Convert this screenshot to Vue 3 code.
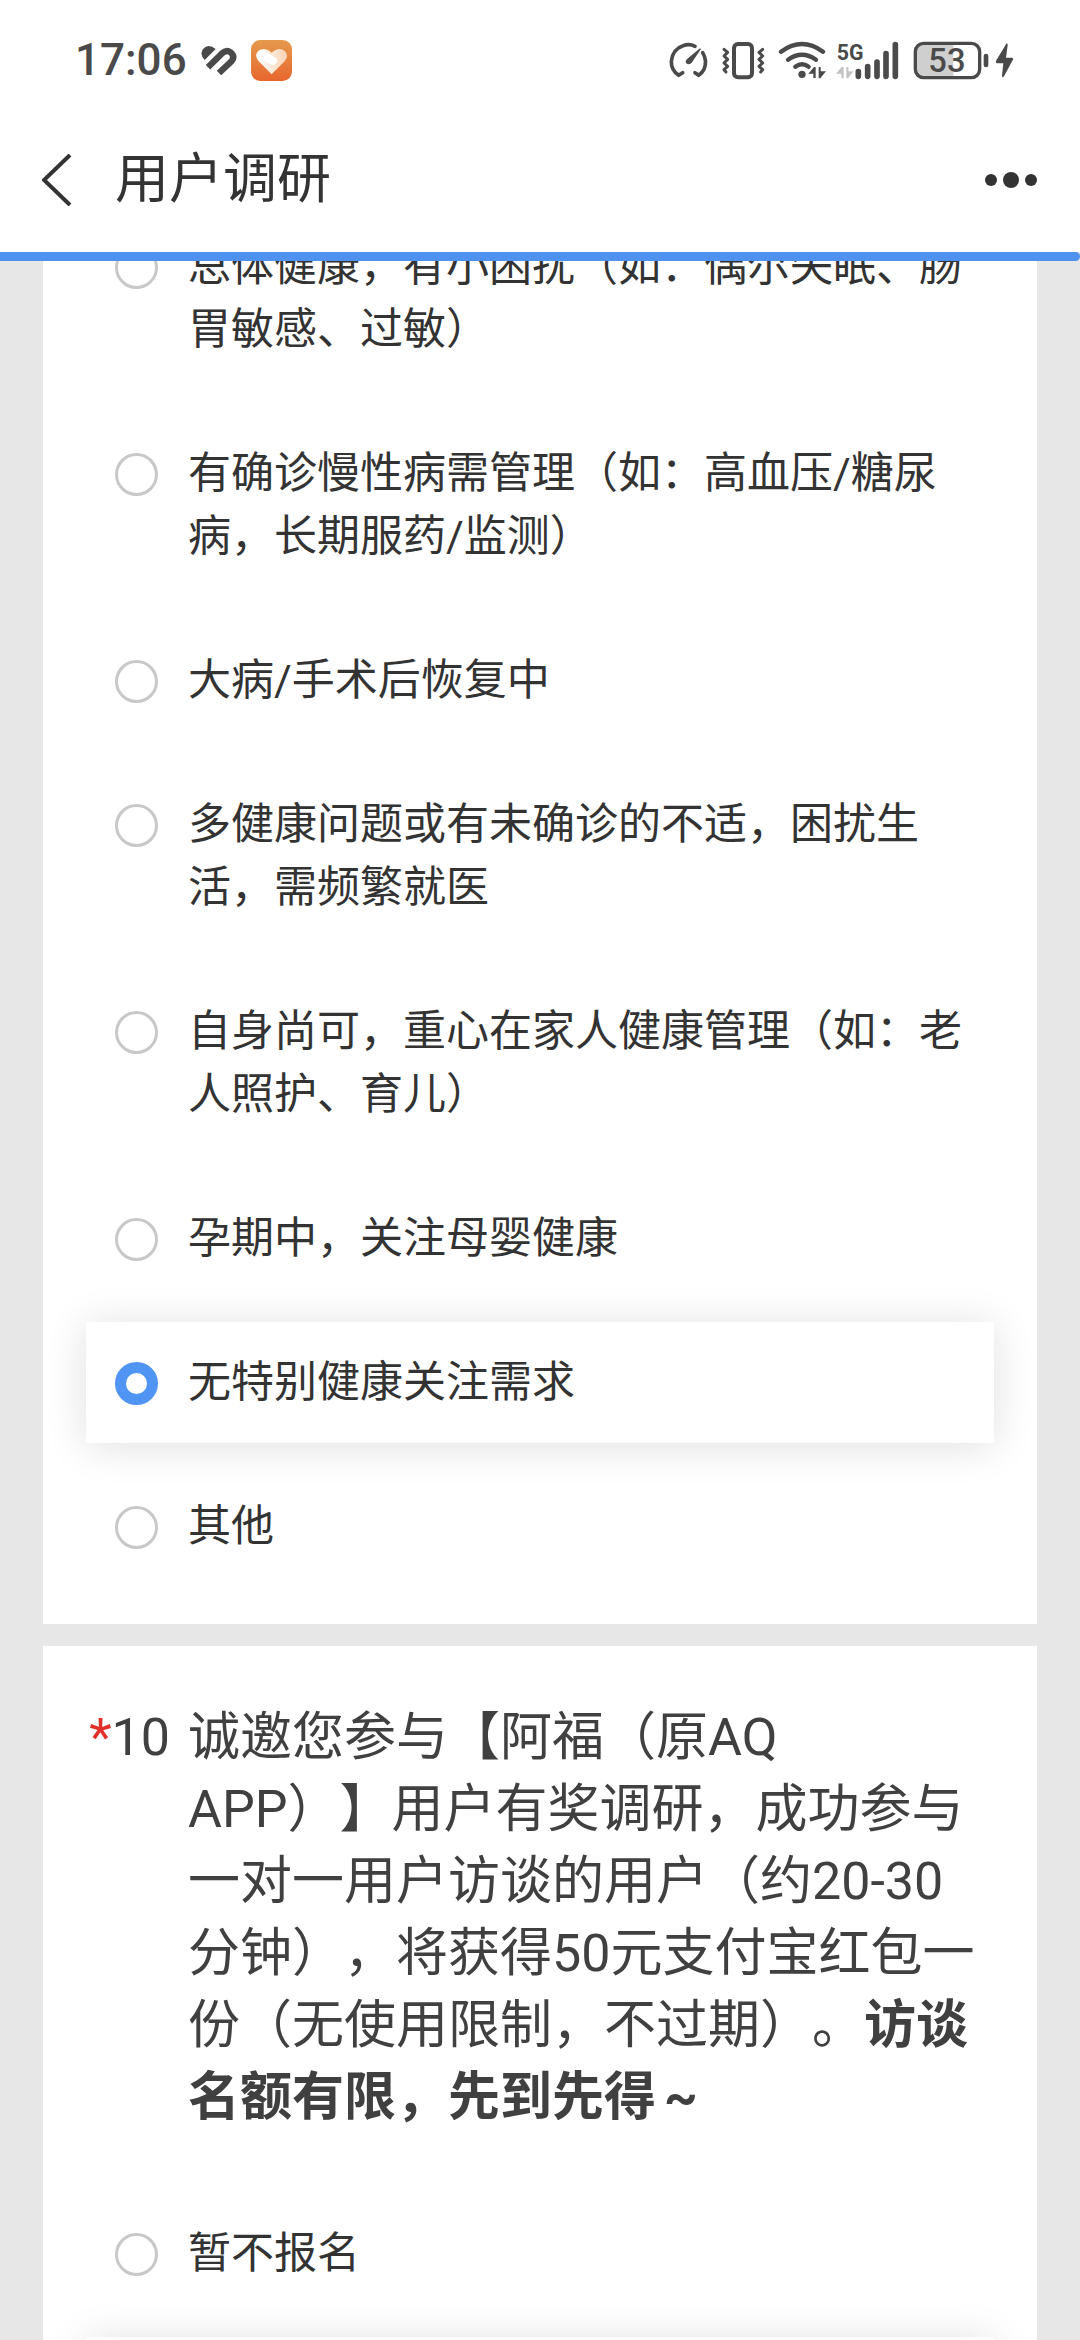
<script setup>
import { ref } from 'vue'

const healthOptions = [
  '总体健康，有小困扰（如：偶尔失眠、肠胃敏感、过敏）',
  '有确诊慢性病需管理（如：高血压/糖尿病，长期服药/监测）',
  '大病/手术后恢复中',
  '多健康问题或有未确诊的不适，困扰生活，需频繁就医',
  '自身尚可，重心在家人健康管理（如：老人照护、育儿）',
  '孕期中，关注母婴健康',
  '无特别健康关注需求',
  '其他',
]
const signupOptions = ['暂不报名', '']

const health = ref(6)
const signup = ref(1)
</script>

<template>
  <div class="screen">
    <header class="top">
      <div class="status">
        <div class="status-left">
          <span class="time">17:06</span>
          <svg width="36" height="30" viewBox="12 14 108 90" aria-hidden="true">
            <path d="M33 81 L74 40 Q88 27 101 36 Q115 48 104 62 L66 98" fill="none" stroke="#4a4a4a" stroke-width="19" />
            <path d="M23 59 Q7 43 18 26 Q34 8 56 26 Z" fill="#4a4a4a" />
          </svg>
          <svg width="41" height="41" viewBox="0 0 123 123" aria-hidden="true">
            <defs>
              <linearGradient id="tile" x1="0" y1="0" x2="0" y2="1">
                <stop offset="0" stop-color="#e59a4c" />
                <stop offset="1" stop-color="#e8662e" />
              </linearGradient>
              <linearGradient id="heart" x1="0" y1="0" x2="1" y2="0">
                <stop offset="0" stop-color="#fff" />
                <stop offset="1" stop-color="#f8d3b4" />
              </linearGradient>
            </defs>
            <rect width="123" height="123" rx="28" fill="url(#tile)" />
            <path d="M62 103 L23 64 Q8 46 22 33 Q40 19 62 38 Q84 19 101 33 Q116 46 101 64 Z" fill="url(#heart)" />
            <path d="M30 43 L66 62" stroke="#fff" stroke-width="24" stroke-linecap="round" />
          </svg>
        </div>
        <div class="status-right">
          <svg width="41" height="39" viewBox="54 60 123 117" aria-hidden="true">
            <g fill="none" stroke="#4a4a4a" stroke-width="11" stroke-linecap="round" stroke-linejoin="round">
              <path d="M95 155 L83 163 Q60 147 61 121 Q65 84 96 74 Q116 67 132 76" />
              <path d="M155 95 Q170 120 159 145 Q153 156 143 163 L132 155" />
            </g>
            <path d="M150 84 L122 125 Q113 134 106 127 Q101 120 109 113 L147 82 Z" fill="#4a4a4a" />
          </svg>
          <svg width="48" height="39" viewBox="207 60 144 117" aria-hidden="true">
            <g fill="none" stroke="#4a4a4a" stroke-linecap="round" stroke-linejoin="round">
              <rect x="249" y="69" width="54" height="100" rx="12" stroke-width="12" />
              <path stroke-width="9" d="M219 85 L230 94 L219 105 L230 115 L219 126 L230 136 L219 146 L225 153" />
              <path stroke-width="9" d="M335 85 L324 94 L335 105 L324 115 L335 126 L324 136 L335 146 L329 153" />
            </g>
          </svg>
          <svg width="48" height="39" viewBox="381 60 144 117" aria-hidden="true">
            <g fill="none" stroke="#4a4a4a" stroke-width="13" stroke-linecap="round">
              <path d="M390 92 Q453 46 516 92" />
              <path d="M411 116 Q453 86 495 116" />
              <path d="M433 137 Q453 123 473 137" />
            </g>
            <circle cx="453" cy="160" r="11" fill="#4a4a4a" />
            <path d="M472 158 L489 138 H494 V171 H487 V158 Z M503 138 H509 V151 H525 L508 172 H503 Z" fill="#4a4a4a" />
          </svg>
          <svg width="67" height="39" viewBox="555 60 201 117" role="img" aria-label="5G">
            <text class="net" x="557" y="116">5G</text>
            <path d="M555 158 L572 138 H578 V172 H571 V158 Z M586 138 H592 V151 H608 L591 172 H586 Z" fill="#c4c4c4" />
            <g stroke="#4a4a4a" stroke-width="17" stroke-linecap="round">
              <path d="M622 152 V166 M650 137 V166 M678 123 V166 M705 98 V166 M733 71 V166" />
            </g>
          </svg>
          <svg width="102" height="39" viewBox="786 60 306 117" role="img" aria-label="53%">
            <path d="M907 65 H812 Q793 67 793 88 V150 Q793 170 812 170 H907 Z" fill="#cfcfcf" />
            <rect x="793" y="67" width="193" height="103" rx="25" fill="none" stroke="#4a4a4a" stroke-width="10" />
            <path d="M1005 105 V132" stroke="#4a4a4a" stroke-width="14" stroke-linecap="round" />
            <path d="M1066 68 Q1071 66 1070 73 L1065 110 H1083 Q1089 112 1085 118 L1059 166 Q1053 172 1053 164 L1057 127 H1038 Q1032 124 1036 118 Z" fill="#4a4a4a" />
            <text class="level" x="832" y="154">53</text>
          </svg>
        </div>
      </div>
      <nav class="nav">
        <button class="back" type="button" aria-label="返回">
          <svg width="30" height="52" viewBox="0 0 30 52" aria-hidden="true">
            <path d="M28 1 L2 26 L28 51" fill="none" stroke="#333" stroke-width="4" />
          </svg>
        </button>
        <h1>用户调研</h1>
        <button class="more" type="button" aria-label="更多">
          <svg width="54" height="16" viewBox="0 0 54 16" aria-hidden="true">
            <g fill="#333">
              <circle cx="7" cy="8" r="6" />
              <circle cx="27" cy="8" r="8" />
              <circle cx="47" cy="8" r="6" />
            </g>
          </svg>
        </button>
      </nav>
      <div class="track"><div class="bar"></div></div>
    </header>

    <main class="scroll">
      <form class="survey">
        <section class="card scrolled">
          <label v-for="(text, i) in healthOptions" :key="i" class="option" :class="{ picked: health === i }">
            <input v-model="health" type="radio" name="health" :value="i" />
            <span>{{ text }}</span>
          </label>
        </section>

        <section class="card question">
          <div class="title">
            <span class="number"><i>*</i>10</span>
            <h2>诚邀您参与【阿福（原AQ APP）】用户有奖调研，成功参与一对一用户访谈的用户（约20-30分钟），将获得50元支付宝红包一份（无使用限制，不过期）。<b>访谈名额有限，先到先得<span class="wave">~</span></b></h2>
          </div>
          <label v-for="(text, i) in signupOptions" :key="i" class="option" :class="{ picked: signup === i }">
            <input v-model="signup" type="radio" name="signup" :value="i" />
            <span>{{ text }}</span>
          </label>
        </section>
      </form>
    </main>
  </div>
</template>

<style>
body {
  margin: 0;
  background: #e7e7e7;
}
</style>

<style scoped>
.screen {
  display: flex;
  flex-direction: column;
  height: 100vh;
  overflow: hidden;
  background: #e7e7e7;
  color: #333;
  font-family: Roboto, "Noto Sans CJK SC", sans-serif;
  text-spacing-trim: space-all;
}
.top {
  flex: none;
  background: #fff;
}
.status {
  display: flex;
  align-items: center;
  justify-content: space-between;
  height: 120px;
  padding: 0 65px 0 75px;
}
.status-left,
.status-right {
  display: flex;
  align-items: center;
  gap: 10px;
}
.status-left {
  gap: 14px;
}
.time {
  color: #4a4a4a;
  font-size: 44px;
  font-weight: 500;
  line-height: 52px;
}
.net {
  fill: #4a4a4a;
  font-family: "Liberation Sans Narrow", Roboto, sans-serif;
  font-size: 64px;
  font-weight: 700;
}
.level {
  fill: #4a4a4a;
  font-size: 98px;
  font-weight: 500;
}
.nav {
  display: flex;
  align-items: center;
  height: 120px;
  margin-bottom: 12px;
  padding: 0 42px;
}
.nav button {
  display: flex;
  padding: 0;
  border: 0;
  background: none;
}
.nav h1 {
  flex: 1;
  margin: 0 0 0 43px;
  font-size: 54px;
  font-weight: 400;
  line-height: 72px;
}
.track {
  height: 9px;
  background: #e7e7e7;
}
.bar {
  height: 100%;
  border-radius: 0 5px 5px 0;
  background: #4f91ee;
}
.scroll {
  flex: 1;
  min-height: 0;
  overflow: hidden;
}
.survey {
  display: flex;
  flex-direction: column;
  gap: 22px;
  padding: 0 43px;
}
.card {
  display: flex;
  flex-direction: column;
  gap: 23px;
  padding: 0 43px 37px;
  background: #fff;
}
/* The list is shown part-way through its scroll. */
.scrolled {
  margin-top: -55px;
}
.question {
  padding-top: 56px;
}
.title {
  display: flex;
  margin-bottom: 36px;
  color: #404040;
  font-size: 52px;
  line-height: 72px;
}
.number {
  flex: none;
  box-sizing: border-box;
  width: 102px;
  padding-right: 18px;
  text-align: right;
}
.number i {
  color: #e0302a;
  font-style: normal;
}
.title h2 {
  flex: 1;
  margin: 0;
  padding-right: 14px;
  font-size: 52px;
  font-weight: 400;
}
.wave {
  padding: 0 8px;
}
.option {
  display: flex;
  align-items: flex-start;
  gap: 30px;
  min-height: 63px;
  padding: 29px;
  font-size: 43px;
  line-height: 63px;
}
.option span {
  flex: 1;
}
.option input {
  flex: none;
  box-sizing: border-box;
  width: 43px;
  height: 43px;
  margin: 11px 0 0;
  border: 3px solid #c8c8c8;
  border-radius: 50%;
  background: #fff;
  appearance: none;
}
.option input:checked {
  border: 11px solid #5094f4;
}
.picked {
  background: #fff;
  box-shadow: 0 3px 40px rgba(0, 0, 0, 0.13);
}
</style>
